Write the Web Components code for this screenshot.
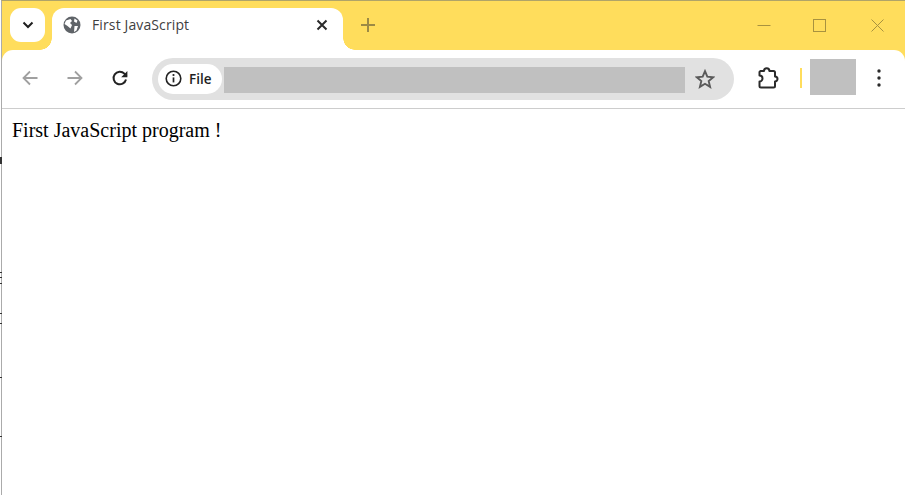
<!DOCTYPE html>
<html>
<head>
<meta charset="utf-8">
<title>First JavaScript</title>
<style>
  html, body { margin: 0; height: 100%; background: #fff; }
  body { overflow: hidden; }
</style>
</head>
<body>
<browser-window>
  <tab-strip slot="strip" title-text="First JavaScript"></tab-strip>
  <nav-toolbar slot="toolbar"></nav-toolbar>
  First JavaScript program !
</browser-window>

<script>
class BrowserWindow extends HTMLElement {
  constructor() {
    super();
    this._shadowRoot = this.attachShadow({ mode: 'open' });
    this._shadowRoot.innerHTML = `
      <style>
        :host {
          display: flex;
          flex-direction: column;
          position: relative;
          width: 904px;
          height: 495px;
          box-sizing: border-box;
          margin-left: 1px;
          border-left: 1px solid #ababab;
          border-top: 1px solid #b0a468;
          background: #ffdd5c;
        }
        .page {
          flex: 1;
          background: #fff;
          padding: 9px 10px;
          font: 20px/24px "Liberation Serif", serif;
          color: #000;
        }
        .tick {
          position: absolute;
          left: -2px;
          width: 2px;
          height: 1px;
          background: #333;
        }
      </style>
      <slot name="strip"></slot>
      <slot name="toolbar"></slot>
      <div class="page"><slot></slot></div>
      <i class="tick" style="top:156px;height:7px"></i>
      <i class="tick" style="top:271px"></i>
      <i class="tick" style="top:276px"></i>
      <i class="tick" style="top:282px"></i>
      <i class="tick" style="top:312px"></i>
      <i class="tick" style="top:322px"></i>
      <i class="tick" style="top:376px"></i>
      <i class="tick" style="top:435px"></i>
    `;
  }
}

class TabStrip extends HTMLElement {
  constructor() {
    super();
    this._shadowRoot = this.attachShadow({ mode: 'open' });
  }

  connectedCallback() {
    const title = this.getAttribute('title-text');
    this._shadowRoot.innerHTML = `
      <style>
        :host {
          display: flex;
          align-items: flex-start;
          height: 49px;
          box-sizing: border-box;
          padding: 7px 0 0 8px;
        }
        .tabs-btn {
          width: 35px;
          height: 34px;
          background: #fff;
          border-radius: 11px;
          display: flex;
          align-items: center;
          justify-content: center;
          margin-right: 7px;
        }
        .tab {
          position: relative;
          width: 291px;
          height: 42px;
          box-sizing: border-box;
          background: #fff;
          border-radius: 12px 12px 0 0;
          display: flex;
          align-items: center;
          padding: 0 12px 8px 11px;
          color: #3f3f3f;
          font: 14px/20px "Open Sans", sans-serif;
          letter-spacing: .12px;
        }
        .tab::before, .tab::after {
          content: "";
          position: absolute;
          bottom: 0;
          width: 12px;
          height: 12px;
        }
        .tab::before { left: -12px; background: radial-gradient(circle at 0 0, transparent 11.5px, #fff 12px); }
        .tab::after { right: -12px; background: radial-gradient(circle at 100% 0, transparent 11.5px, #fff 12px); }
        .title { flex: 1; margin-left: 11px; }
        .new-tab { margin: 10px 0 0 18px; display: flex; }
        .controls { margin-left: auto; display: flex; gap: 42px; padding: 11px 20px 0 0; }
        .controls svg + svg + svg { margin-left: 2px; }
        svg { display: block; }
      </style>
      <div class="tabs-btn">
        <svg width="12" height="8" viewBox="0 0 12 8"><path d="M1.500 1.500 6 6l4.500-4.500" fill="none" stroke="#1f1f1f" stroke-width="2"/></svg>
      </div>
      <div class="tab">
        <svg width="18" height="18" viewBox="0 0 18 18"><circle cx="9" cy="9" r="8.500" fill="#5f6368"/><path d="M3 4.500 7.500 3 9 5 7 7l2 2-1.500 3.500L4.500 10 1.500 8ZM11.500 10H15l-1.500 4.500L11 16ZM11.500 2.500l3 2L13.500 7 11 5.500Z" fill="#fff"/></svg>
        <span class="title">${title}</span>
        <svg width="12" height="12" viewBox="0 0 12 12"><path d="M1.500 1.500l9 9M10.500 1.500l-9 9" stroke="#2a2a2a" stroke-width="2"/></svg>
        <span style="width:3px"></span>
      </div>
      <div class="new-tab">
        <svg width="14" height="14" viewBox="0 0 14 14"><path d="M7 0v14M0 7h14" stroke="#9c8a45" stroke-width="2"/></svg>
      </div>
      <div class="controls">
        <svg width="14" height="14" viewBox="0 0 14 14"><path d="M.5 6.500h13" stroke="#a8923f" stroke-width="1"/></svg>
        <svg width="14" height="14" viewBox="0 0 14 14"><rect x=".5" y=".5" width="12" height="12" fill="none" stroke="#a8923f"/></svg>
        <svg width="14" height="14" viewBox="0 0 14 14"><path d="M.5.5l12 12M12.500.5l-12 12" stroke="#a8923f"/></svg>
      </div>
    `;
  }
}

class NavToolbar extends HTMLElement {
  constructor() {
    super();
    this._shadowRoot = this.attachShadow({ mode: 'open' });
    this._shadowRoot.innerHTML = `
      <style>
        :host {
          display: flex;
          align-items: center;
          height: 59px;
          box-sizing: border-box;
          padding: 0 0 1px 19px;
          background: #fff;
          border-bottom: 1px solid #cdcdcd;
          border-radius: 11px 11px 0 0;
        }
        svg { display: block; flex: none; }
        .nav { display: flex; gap: 27px; margin-right: 23px; margin-bottom: 1px; }
        .omnibox {
          flex: none;
          width: 582px;
          height: 42px;
          box-sizing: border-box;
          background: #e1e1e1;
          border-radius: 21px;
          display: flex;
          align-items: center;
          padding: 0 19px 0 6px;
        }
        .chip {
          flex: none;
          width: 64px;
          height: 30px;
          box-sizing: border-box;
          background: #fff;
          border-radius: 15px;
          display: flex;
          align-items: center;
          gap: 7px;
          padding-left: 7px;
          font: 600 13.5px/20px "Open Sans", sans-serif;
          color: #1f1f1f;
        }
        .url { width: 461px; height: 26px; background: #c0c0c0; margin: 2px 10px 0 2px; flex: none; }
        .extensions { margin-left: 22px; margin-bottom: 2px; }
        .divider { flex: none; width: 2px; height: 20px; background: #ffdd5c; margin: 0 8px 2px 20px; }
        .avatar { flex: none; width: 46px; height: 36px; background: #c0c0c0; margin: 0 21px 4px 0; }
        .menu { margin-bottom: 2px; }
      </style>
      <div class="nav">
        <svg width="18" height="18" viewBox="0 0 18 18"><path d="M16.500 9H3M9 2.500 2.500 9 9 15.500" fill="none" stroke="#a0a0a0" stroke-width="1.800"/></svg>
        <svg width="18" height="18" viewBox="0 0 18 18"><path d="M1.500 9H15M9 2.500 15.500 9 9 15.500" fill="none" stroke="#a0a0a0" stroke-width="1.800"/></svg>
        <svg width="18" height="18" viewBox="0 0 18 18"><path d="M15 10.500A6.300 6.300 0 1 1 13.400 4.600L15.500 7" fill="none" stroke="#222" stroke-width="2"/><path d="M16.400 2v6.200h-6.200Z" fill="#222"/></svg>
      </div>
      <div class="omnibox">
        <div class="chip">
          <svg width="17" height="17" viewBox="0 0 17 17"><circle cx="8.500" cy="8.500" r="7.300" fill="none" stroke="#222" stroke-width="1.600"/><path d="M8.500 7.400v5" stroke="#222" stroke-width="1.700"/><circle cx="8.500" cy="5" r="1.100" fill="#222"/></svg>
          <span>File</span>
        </div>
        <div class="url"></div>
        <svg width="20" height="20" viewBox="0 0 20 20"><path d="M10 2.200 12.300 7.700 18.200 8.200 13.700 12.100 15.100 17.900 10 14.800 4.900 17.900 6.300 12.100 1.800 8.200 7.700 7.700Z" fill="none" stroke="#5a5a5a" stroke-width="1.900"/></svg>
      </div>
      <svg class="extensions" width="24" height="24" viewBox="0 0 24 24"><path d="M4.500 5H8a2.700 2.700 0 0 1 5.400 0h4.100A1.500 1.500 0 0 1 19 6.500v4a2.500 2.500 0 0 1 0 5V20a1.500 1.500 0 0 1-1.500 1.500H5A1.500 1.500 0 0 1 3.500 20v-4.500a3 3 0 0 0 0-6V6Z" fill="#fff" stroke="#2a2a2a" stroke-width="2" stroke-linejoin="round"/></svg>
      <div class="divider"></div>
      <div class="avatar"></div>
      <svg class="menu" width="4" height="18" viewBox="0 0 4 18"><circle cx="2" cy="2" r="1.700" fill="#2a2a2a"/><circle cx="2" cy="9" r="1.700" fill="#2a2a2a"/><circle cx="2" cy="16" r="1.700" fill="#2a2a2a"/></svg>
    `;
  }
}

customElements.define('browser-window', BrowserWindow);
customElements.define('tab-strip', TabStrip);
customElements.define('nav-toolbar', NavToolbar);
</script>
</body>
</html>
